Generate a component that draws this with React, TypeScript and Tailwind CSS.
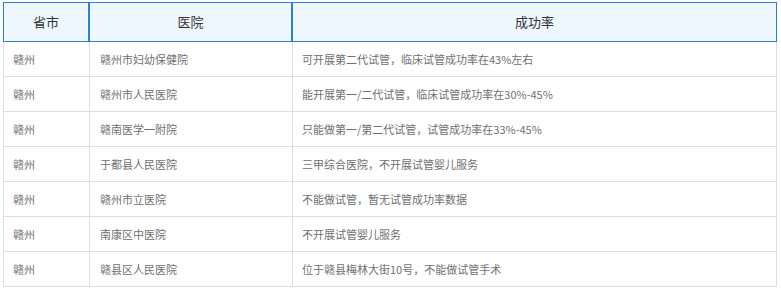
const rows: [string, string, string][] = [
  ["赣州", "赣州市妇幼保健院", "可开展第二代试管，临床试管成功率在43%左右"],
  ["赣州", "赣州市人民医院", "能开展第一/二代试管，临床试管成功率在30%-45%"],
  ["赣州", "赣南医学一附院", "只能做第一/第二代试管，试管成功率在33%-45%"],
  ["赣州", "于都县人民医院", "三甲综合医院，不开展试管婴儿服务"],
  ["赣州", "赣州市立医院", "不能做试管，暂无试管成功率数据"],
  ["赣州", "南康区中医院", "不开展试管婴儿服务"],
  ["赣州", "赣县区人民医院", "位于赣县梅林大街10号，不能做试管手术"],
];

const font = { fontFamily: '"Noto Sans CJK SC", "Liberation Sans", sans-serif' };

export default function App() {
  return (
    <div className="bg-white w-[781px] h-[292px] pl-[3px] pt-[2px]" style={font}>
      <div className="w-[774px]">
        <div className="flex h-[40px] text-[13px] text-[#333]">
          <div className="w-[86px] border border-[#2a80d6] bg-[#eef6fe] flex items-center justify-center">
            省市
          </div>
          <div className="w-[203px] border border-[#2a80d6] bg-[#eef6fe] flex items-center justify-center">
            医院
          </div>
          <div className="w-[485px] border border-[#2a80d6] bg-[#eef6fe] flex items-center justify-center">
            成功率
          </div>
        </div>
        {rows.map((r, i) => (
          <div key={i} className="flex h-[35px] text-[11px] text-[#707070]">
            <div className="w-[86px] border-l border-b border-[#dddddd] flex items-center pl-[9px]">
              {r[0]}
            </div>
            <div className="w-[203px] border-l border-b border-[#dddddd] flex items-center pl-[10px]">
              {r[1]}
            </div>
            <div className="w-[485px] border-l border-r border-b border-[#dddddd] flex items-center pl-[9px]">
              {r[2]}
            </div>
          </div>
        ))}
      </div>
    </div>
  );
}
